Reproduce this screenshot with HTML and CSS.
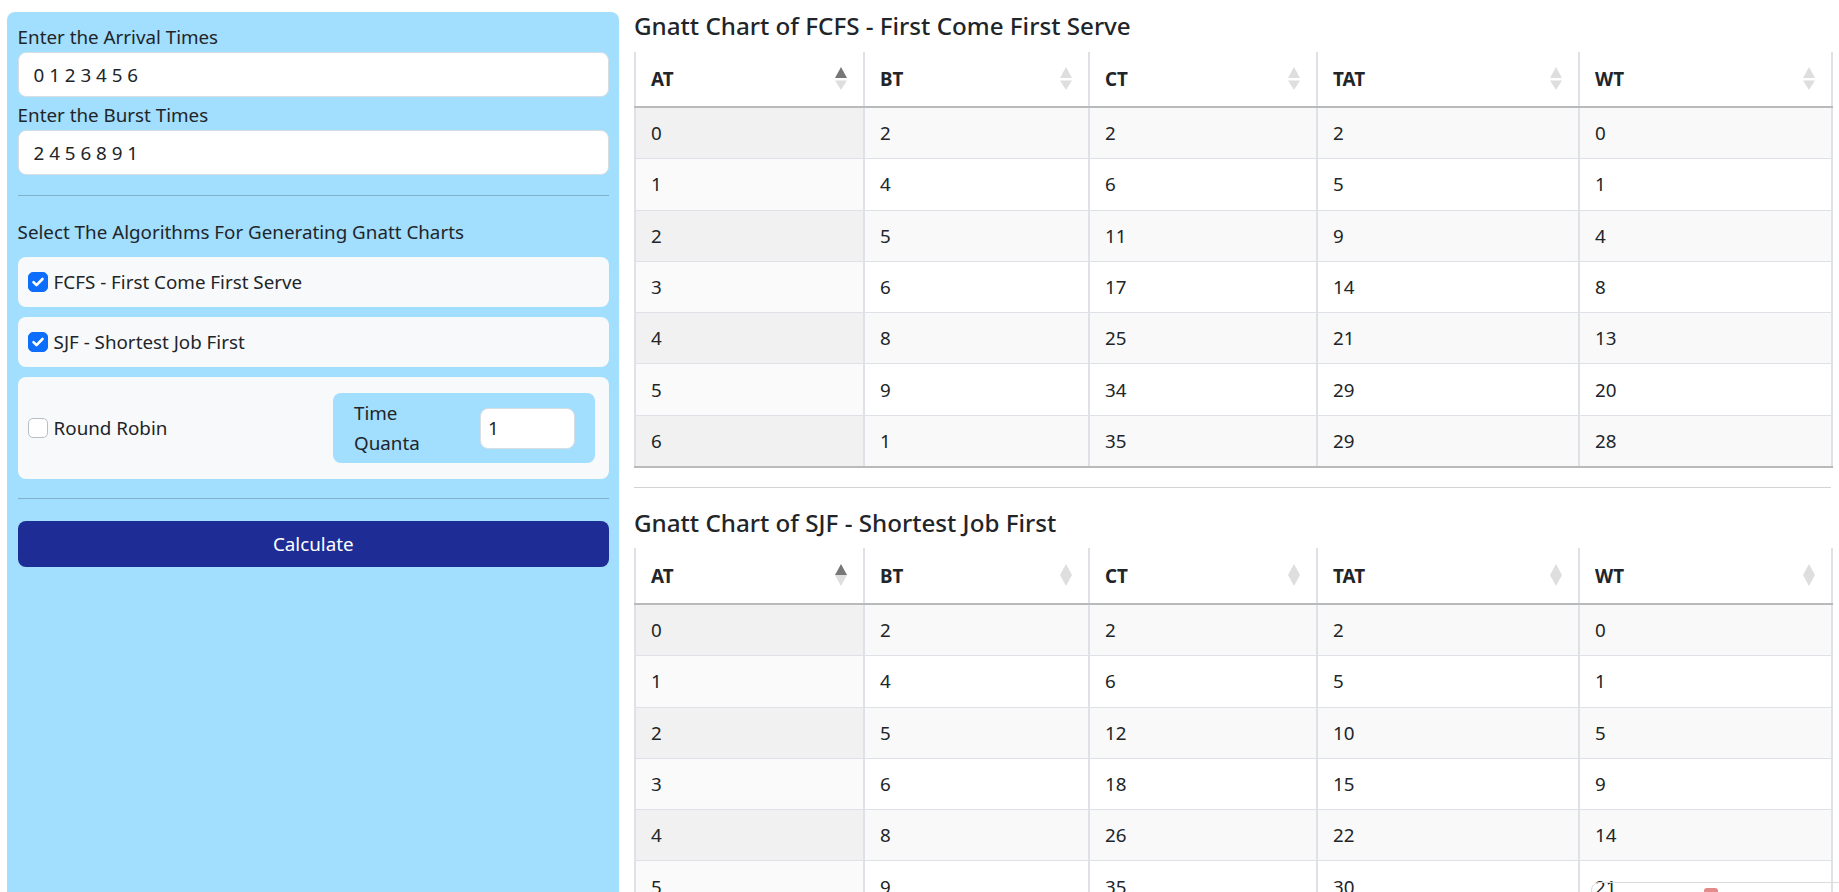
FILE: index.html
```html
<!DOCTYPE html>
<html lang="en">
<head>
<meta charset="utf-8">
<title>CPU Scheduling - Gnatt Charts</title>
<link rel="stylesheet" href="styles.css">
</head>
<body>
<div class="page">
  <aside class="panel">
    <label class="lbl">Enter the Arrival Times</label>
    <input class="field" type="text" value="0 1 2 3 4 5 6">
    <label class="lbl lbl-next">Enter the Burst Times</label>
    <input class="field" type="text" value="2 4 5 6 8 9 1">
    <hr class="sep">
    <p class="select-title">Select The Algorithms For Generating Gnatt Charts</p>
    <div class="algo">
      <span class="check on"><svg viewBox="0 0 20 20" width="20" height="20"><path d="M5.5 10.2l3 3 6-6.2" fill="none" stroke="#fff" stroke-width="2.6" stroke-linecap="round" stroke-linejoin="round"/></svg></span>
      <span class="algo-name">FCFS - First Come First Serve</span>
    </div>
    <div class="algo">
      <span class="check on"><svg viewBox="0 0 20 20" width="20" height="20"><path d="M5.5 10.2l3 3 6-6.2" fill="none" stroke="#fff" stroke-width="2.6" stroke-linecap="round" stroke-linejoin="round"/></svg></span>
      <span class="algo-name">SJF - Shortest Job First</span>
    </div>
    <div class="algo algo-rr">
      <div class="rr-left">
        <span class="check"></span>
        <span class="algo-name">Round Robin</span>
      </div>
      <div class="tq">
        <span class="tq-label">Time Quanta</span>
        <input class="tq-input" type="text" value="1">
      </div>
    </div>
    <hr class="sep sep-last">
    <button class="calc" type="button">Calculate</button>
  </aside>

  <main class="results">
    <h5 class="chart-title">Gnatt Chart of FCFS - First Come First Serve</h5>
    <table class="tbl">
      <colgroup><col class="w-at"><col class="w-bt"><col class="w-ct"><col class="w-tat"><col class="w-wt"></colgroup>
      <thead>
        <tr>
          <th><div class="th-inner">AT<svg class="sort" viewBox="0 0 12 23" width="12" height="23"><polygon class="up on" points="0,11 6,0 12,11"/><polygon class="down" points="0,13.5 12,13.5 6,23"/></svg></div></th>
          <th><div class="th-inner">BT<svg class="sort" viewBox="0 0 12 23" width="12" height="23"><polygon class="up" points="0,11 6,0 12,11"/><polygon class="down" points="0,13.5 12,13.5 6,23"/></svg></div></th>
          <th><div class="th-inner">CT<svg class="sort" viewBox="0 0 12 23" width="12" height="23"><polygon class="up" points="0,11 6,0 12,11"/><polygon class="down" points="0,13.5 12,13.5 6,23"/></svg></div></th>
          <th><div class="th-inner">TAT<svg class="sort" viewBox="0 0 12 23" width="12" height="23"><polygon class="up" points="0,11 6,0 12,11"/><polygon class="down" points="0,13.5 12,13.5 6,23"/></svg></div></th>
          <th><div class="th-inner">WT<svg class="sort" viewBox="0 0 12 23" width="12" height="23"><polygon class="up" points="0,11 6,0 12,11"/><polygon class="down" points="0,13.5 12,13.5 6,23"/></svg></div></th>
        </tr>
      </thead>
      <tbody>
        <tr><td>0</td><td>2</td><td>2</td><td>2</td><td>0</td></tr>
        <tr><td>1</td><td>4</td><td>6</td><td>5</td><td>1</td></tr>
        <tr><td>2</td><td>5</td><td>11</td><td>9</td><td>4</td></tr>
        <tr><td>3</td><td>6</td><td>17</td><td>14</td><td>8</td></tr>
        <tr><td>4</td><td>8</td><td>25</td><td>21</td><td>13</td></tr>
        <tr><td>5</td><td>9</td><td>34</td><td>29</td><td>20</td></tr>
        <tr><td>6</td><td>1</td><td>35</td><td>29</td><td>28</td></tr>
      </tbody>
    </table>

    <hr class="sep-light">

    <h5 class="chart-title">Gnatt Chart of SJF - Shortest Job First</h5>
    <table class="tbl">
      <colgroup><col class="w-at"><col class="w-bt"><col class="w-ct"><col class="w-tat"><col class="w-wt"></colgroup>
      <thead>
        <tr>
          <th><div class="th-inner">AT<svg class="sort" viewBox="0 0 12 23" width="12" height="23"><polygon class="up on" points="0,11 6,0 12,11"/><polygon class="down" points="0,11 12,11 6,22"/></svg></div></th>
          <th><div class="th-inner">BT<svg class="sort" viewBox="0 0 12 23" width="12" height="23"><polygon class="up" points="0,11 6,0 12,11"/><polygon class="down" points="0,11 12,11 6,22"/></svg></div></th>
          <th><div class="th-inner">CT<svg class="sort" viewBox="0 0 12 23" width="12" height="23"><polygon class="up" points="0,11 6,0 12,11"/><polygon class="down" points="0,11 12,11 6,22"/></svg></div></th>
          <th><div class="th-inner">TAT<svg class="sort" viewBox="0 0 12 23" width="12" height="23"><polygon class="up" points="0,11 6,0 12,11"/><polygon class="down" points="0,11 12,11 6,22"/></svg></div></th>
          <th><div class="th-inner">WT<svg class="sort" viewBox="0 0 12 23" width="12" height="23"><polygon class="up" points="0,11 6,0 12,11"/><polygon class="down" points="0,11 12,11 6,22"/></svg></div></th>
        </tr>
      </thead>
      <tbody>
        <tr><td>0</td><td>2</td><td>2</td><td>2</td><td>0</td></tr>
        <tr><td>1</td><td>4</td><td>6</td><td>5</td><td>1</td></tr>
        <tr><td>2</td><td>5</td><td>12</td><td>10</td><td>5</td></tr>
        <tr><td>3</td><td>6</td><td>18</td><td>15</td><td>9</td></tr>
        <tr><td>4</td><td>8</td><td>26</td><td>22</td><td>14</td></tr>
        <tr><td>5</td><td>9</td><td>35</td><td>30</td><td>21</td></tr>
        <tr><td>6</td><td>1</td><td>36</td><td>30</td><td>29</td></tr>
      </tbody>
    </table>
  </main>
</div>
<div class="widget"><span class="widget-mark"></span></div>
</body>
</html>
```

FILE: styles.css
```css
html {
  scrollbar-width: none;
}
html::-webkit-scrollbar {
  display: none;
}
body {
  margin: 0;
  font-family: "Noto Sans", "Open Sans", sans-serif;
  font-size: 18.8px;
  line-height: 30px;
  color: #212529;
  background: #fff;
}
.page {
  display: flex;
  align-items: stretch;
  gap: 15px;
  padding: 0 8px 20px 7px;
}

/* ---------- left panel ---------- */
.panel {
  flex: none;
  width: 612px;
  box-sizing: border-box;
  margin-top: 12px;
  padding: 10px 10px 20px 10.6px;
  background: #a2defd;
  border-radius: 8px;
}
.lbl {
  display: block;
  height: 30px;
}
.lbl-next {
  margin-top: 3px;
}
.field {
  display: block;
  box-sizing: border-box;
  width: 100%;
  height: 45px;
  padding: 0 15px;
  border: 1px solid #d6dde3;
  border-radius: 8px;
  background: #fff;
  font: inherit;
  color: #212529;
  outline: none;
}
.sep {
  margin: 20px 0;
  border: 0;
  border-top: 1px solid #82b0c8;
}
.sep-last {
  margin-top: 19px;
}
.select-title {
  margin: 0 0 10px;
  padding-top: 1px;
}
.algo {
  display: flex;
  align-items: center;
  gap: 6px;
  padding: 10px 10px;
  margin-bottom: 10px;
  background: #f8f9fa;
  border-radius: 8px;
}
.check {
  flex: none;
  width: 20px;
  height: 20px;
  box-sizing: border-box;
  border-radius: 5px;
  background: #fff;
  border: 1px solid #b9bec3;
  display: flex;
}
.check.on {
  background: #0d6efd;
  border-color: #0d6efd;
}
.check svg {
  margin: -1px;
}
.algo-rr {
  justify-content: space-between;
  padding: 16px 14px 16px 10px;
  margin-bottom: 0;
}
.rr-left {
  display: flex;
  align-items: center;
  gap: 6px;
}
.tq {
  display: flex;
  align-items: center;
  justify-content: space-between;
  width: 262px;
  box-sizing: border-box;
  padding: 5px 20px 5px 21px;
  background: #a2defd;
  border-radius: 8px;
}
.tq-label {
  width: 90px;
}
.tq-input {
  box-sizing: border-box;
  width: 95px;
  height: 41px;
  padding: 0 7px;
  border: 1px solid #d6dde3;
  border-radius: 8px;
  background: #fff;
  font: inherit;
  color: #212529;
  outline: none;
}
.calc {
  display: block;
  width: 100%;
  height: 46px;
  margin-top: 21.5px;
  border: 0;
  border-radius: 8px;
  background: #1e2d96;
  color: #fff;
  font: inherit;
}

/* ---------- results ---------- */
.results {
  flex: 1;
  min-width: 0;
  padding-top: 11px;
}
.chart-title {
  margin: 0 0 10.5px;
  font-size: 24.2px;
  font-weight: 500;
  line-height: 30px;
}
.tbl {
  width: 100%;
  table-layout: fixed;
  border-collapse: collapse;
}
.w-at { width: 229px; }
.w-bt { width: 225px; }
.w-ct { width: 228px; }
.w-tat { width: 262px; }
.w-wt { width: 253px; }
.tbl th {
  padding: 12.25px 15px;
  text-align: left;
  font-weight: 700;
  background: #fff;
  border-left: 2px solid #dee2e6;
  border-right: 2px solid #dee2e6;
  border-bottom: 2px solid #b9babb;
}
.th-inner {
  display: flex;
  align-items: center;
  justify-content: space-between;
  height: 30px;
  padding-right: 1px;
}
.sort .up,
.sort .down {
  fill: #dedede;
}
.sort .up.on {
  fill: #777;
}
.tbl td {
  padding: 10.15px 15px;
  border-left: 2px solid #dee2e6;
  border-right: 2px solid #dee2e6;
  border-bottom: 1px solid #dee2e6;
  height: 30px;
}
.tbl tbody tr:nth-child(odd) td {
  background: #f9f9f9;
}
.tbl tbody tr:nth-child(odd) td:first-child {
  background: #f1f1f1;
}
.tbl tbody tr:nth-child(even) td:first-child {
  background: #fafafa;
}
.tbl tbody tr:last-child td {
  border-bottom: 2px solid #b9babb;
}
.sep-light {
  margin: 19px 0 20px;
  border: 0;
  border-top: 1px solid #d2d3d4;
}

/* ---------- corner widget ---------- */
.widget {
  position: fixed;
  left: 1591px;
  top: 882px;
  width: 260px;
  height: 40px;
  box-sizing: border-box;
  border: 1px solid #dcdcdc;
  border-radius: 8px;
  background: transparent;
}
.widget-mark {
  position: absolute;
  left: 112px;
  top: 5px;
  width: 14px;
  height: 6px;
  border-radius: 3px;
  background: #e38a8a;
}
```
